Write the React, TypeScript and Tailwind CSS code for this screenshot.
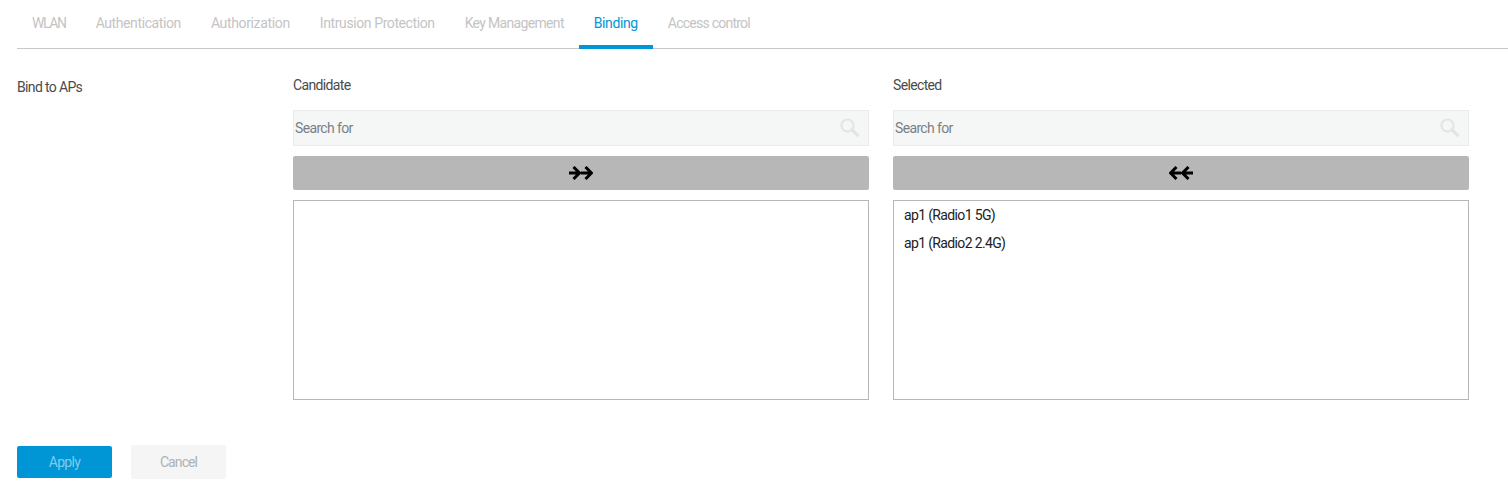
const TABS = [
  { label: "WLAN", spacing: "tracking-[-1.4px]" },
  { label: "Authentication", spacing: "tracking-[-0.4px]" },
  { label: "Authorization", spacing: "tracking-[-0.35px]" },
  { label: "Intrusion Protection", spacing: "tracking-[-0.4px]" },
  { label: "Key Management", spacing: "tracking-[-0.67px]" },
  { label: "Binding", spacing: "tracking-[-0.4px]" },
  { label: "Access control", spacing: "tracking-[-0.75px]" },
];

function ArrowPair({ dir }: { dir: "right" | "left" }) {
  return (
    <svg width="24" height="14" viewBox="0 0 24 14" className={dir === "left" ? "-scale-x-100" : ""}>
      <path d="M0 7H10M4.5 1L10.5 7L4.5 13M12 7H22.5M16.5 1L22.5 7L16.5 13" fill="none" stroke="#000" strokeWidth="3" />
    </svg>
  );
}

function SearchGlyph() {
  return (
    <svg width="20" height="20" viewBox="0 0 20 20" fill="none" stroke="#e3e5e5">
      <circle cx="7.5" cy="7.5" r="6" strokeWidth="2.2" />
      <path d="M12 12L18.5 18" strokeWidth="3.2" />
    </svg>
  );
}

function Column({ title, dir, items }: { title: string; dir: "right" | "left"; items: string[] }) {
  return (
    <div className="w-[576px]">
      <p className="h-[20px] mb-[14px] leading-[18px] text-[#4a4a4a]">{title}</p>
      <div className="h-[36px] flex items-center justify-between pl-[1px] pr-[8px] bg-[#f5f7f7] border border-[#ebecec]">
        <span className="text-[#7a8084]">Search for</span>
        <SearchGlyph />
      </div>
      <button className="mt-[10px] w-full h-[34px] flex items-center justify-center rounded-[2px] bg-[#b7b7b8]">
        <ArrowPair dir={dir} />
      </button>
      <div className="mt-[10px] h-[200px] border border-[#b7b7b8] px-[10px]">
        {items.map((item) => (
          <p key={item} className="h-[28px] leading-[28px] text-[#222]">{item}</p>
        ))}
      </div>
    </div>
  );
}

export default function App() {
  return (
    <div className="w-[1508px] h-[500px] bg-white pl-[17px] text-[14px] tracking-[-0.65px] font-['Roboto',sans-serif] overflow-hidden">
      {/* Tabs */}
      <div className="flex h-[49px] border-b border-[#c8c8ca]">
        {TABS.map((tab) => (
          <div
            key={tab.label}
            className={
              tab.label === "Binding"
                ? `h-[49px] px-[15px] pt-[13px] leading-[20px] text-[#0096d6] border-b-[4px] border-[#0096d6] ${tab.spacing}`
                : `h-[49px] px-[15px] pt-[13px] leading-[20px] text-[#c4c4c4] ${tab.spacing}`
            }
          >
            {tab.label}
          </div>
        ))}
      </div>

      <div className="flex mt-[27px]">
        <p className="w-[276px] pt-[1px] leading-[20px] text-[#4a4a4a]">Bind to APs</p>
        <div className="flex gap-[24px]">
          <Column title="Candidate" dir="right" items={[]} />
          <Column title="Selected" dir="left" items={["ap1 (Radio1 5G)", "ap1 (Radio2 2.4G)"]} />
        </div>
      </div>

      <div className="flex items-center gap-[19px] mt-[45px]">
        <button className="w-[95px] h-[32px] rounded-[2px] bg-[#0096d6] text-[#7fcbeb]">Apply</button>
        <button className="w-[95px] h-[34px] rounded-[2px] bg-[#f5f5f5] text-[#a9b3b9] tracking-[-0.9px]">Cancel</button>
      </div>
    </div>
  );
}
